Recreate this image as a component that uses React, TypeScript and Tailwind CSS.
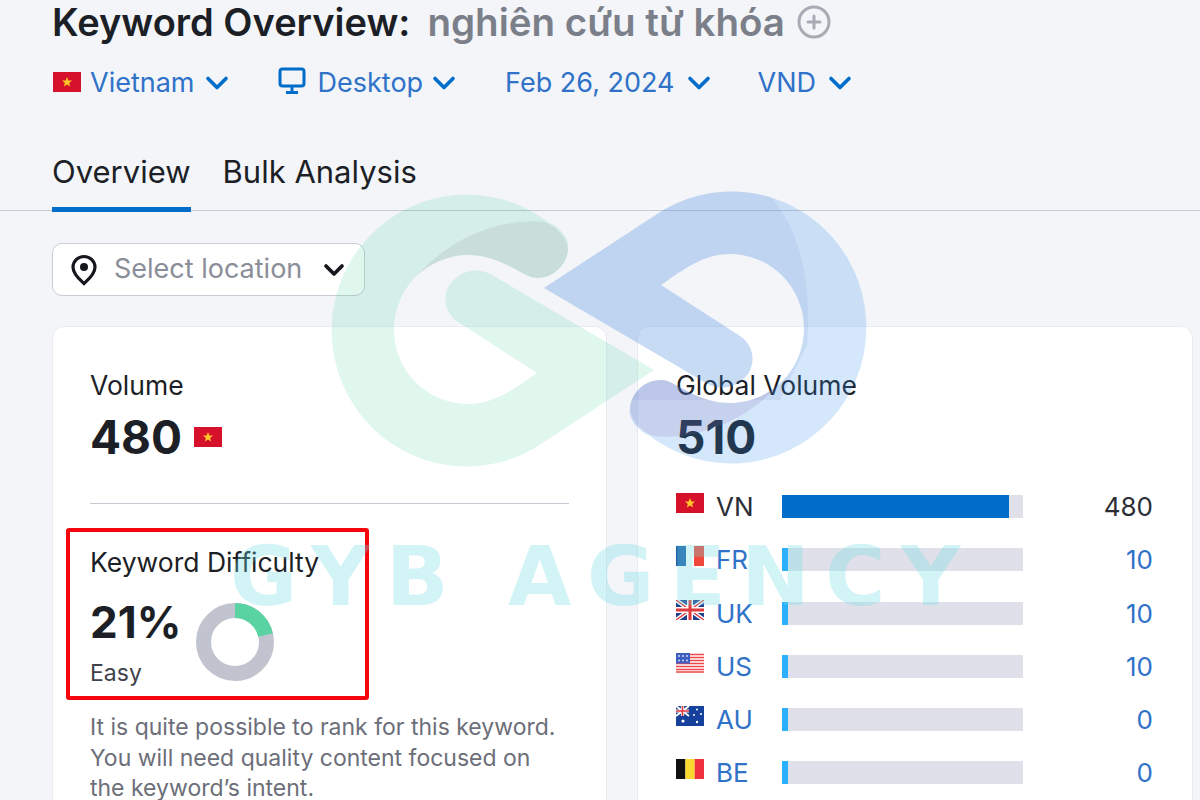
import { ChevronDown, CirclePlus } from "lucide-react";

const font = { fontFamily: "Inter, 'Noto Sans', sans-serif" };

const logoPath =
  "M654 370 L544 442 A135 136 0 1 1 548 222 C562 228 570 240 568 250 C566 270 545 283 528 276 L513 268 C495 258 480 255 468 255 A74 74.5 0 0 0 468 404 C495 404 515 388 537 373 L458 322 C440 310 442 285 460 275 C470 269 482 269 492 275 Z";

const crescentPath =
  "M544 222 C510 218 455 232 418 275 C432 262 450 255 468 255 C480 255 495 258 513 268 L528 276 C545 283 566 270 568 250 C568 238 556 226 544 222 Z";

const Vn = ({ className }: { className: string }) => (
  <svg viewBox="0 0 28 20" className={className}>
    <rect width="28" height="20" fill="#d5112b" />
    <path d="M14 5l1.4 3.4 3.6.2-2.8 2.3.9 3.5-3.1-1.9-3.1 1.9.9-3.5L9 8.6l3.6-.2z" fill="#ffc629" />
  </svg>
);

const Fr = () => (
  <svg viewBox="0 0 28 20" className="w-[28px] h-[20px]">
    <rect width="28" height="20" fill="#fff" />
    <rect width="10" height="20" fill="#1f5fa8" />
    <rect x="18" width="10" height="20" fill="#f0483a" />
  </svg>
);

const Uk = () => (
  <svg viewBox="0 0 28 20" className="w-[28px] h-[20px]">
    <rect width="28" height="20" fill="#23408f" />
    <path d="M0 0L28 20M28 0L0 20" stroke="#fff" strokeWidth="4" />
    <path d="M0 0L28 20M28 0L0 20" stroke="#e0393e" strokeWidth="1.4" />
    <path d="M14 0V20M0 10H28" stroke="#fff" strokeWidth="6" />
    <path d="M14 0V20M0 10H28" stroke="#e0393e" strokeWidth="3" />
  </svg>
);

const Us = () => (
  <svg viewBox="0 0 28 20" className="w-[28px] h-[20px]">
    <rect width="28" height="20" fill="#fff" />
    <path d="M0 1.5H28M0 4.5H28M0 7.5H28M0 10.5H28M0 13.5H28M0 16.5H28M0 19H28" stroke="#f0484a" strokeWidth="1.7" />
    <rect width="14" height="10.5" fill="#3f5fc0" />
    <g fill="#cfd8f5">
      <circle cx="3" cy="3" r="1" />
      <circle cx="7" cy="3" r="1" />
      <circle cx="11" cy="3" r="1" />
      <circle cx="3" cy="7.5" r="1" />
      <circle cx="7" cy="7.5" r="1" />
      <circle cx="11" cy="7.5" r="1" />
    </g>
  </svg>
);

const Au = () => (
  <svg viewBox="0 0 28 20" className="w-[28px] h-[20px]">
    <rect width="28" height="20" fill="#15409c" />
    <rect width="13" height="10" fill="#23408f" />
    <path d="M0 0L13 10M13 0L0 10" stroke="#fff" strokeWidth="1.8" />
    <path d="M6.5 0V10M0 5H13" stroke="#fff" strokeWidth="3.2" />
    <path d="M6.5 0V10M0 5H13" stroke="#e0393e" strokeWidth="1.6" />
    <g fill="#fff">
      <circle cx="7" cy="15" r="1.6" />
      <circle cx="21" cy="3.5" r="1" />
      <circle cx="25" cy="8" r="1" />
      <circle cx="18" cy="9" r="1" />
      <circle cx="21" cy="16" r="1.2" />
    </g>
  </svg>
);

const Be = () => (
  <svg viewBox="0 0 28 20" className="w-[28px] h-[20px]">
    <rect width="9.4" height="20" fill="#111" />
    <rect x="9.4" width="9.3" height="20" fill="#fbd92e" />
    <rect x="18.7" width="9.3" height="20" fill="#f0303c" />
  </svg>
);

const rows = [
  { code: "VN", flag: <Vn className="w-[28px] h-[20px]" />, value: "480", pct: 94 },
  { code: "FR", flag: <Fr />, value: "10", pct: 2.5 },
  { code: "UK", flag: <Uk />, value: "10", pct: 2.5 },
  { code: "US", flag: <Us />, value: "10", pct: 2.5 },
  { code: "AU", flag: <Au />, value: "0", pct: 2.5 },
  { code: "BE", flag: <Be />, value: "0", pct: 2.5 },
];

const Chevron = () => <ChevronDown className="w-[36px] h-[36px] text-[#006dca]" strokeWidth={2.4} />;

export default function App() {
  return (
    <div style={font} className="relative w-[1200px] h-[800px] overflow-hidden bg-[#f3f5f9] text-[#1c1f26]">
      <div className="pl-[52px] pt-[1px]">
        <div className="flex items-center h-[42px]">
          <h1 className="text-[38px] font-semibold leading-none whitespace-nowrap">Keyword Overview:</h1>
          <span className="ml-[17px] text-[38.5px] font-semibold leading-none whitespace-nowrap text-[#7b7f89]">nghiên cứu từ khóa</span>
          <CirclePlus className="ml-[11px] w-[36px] h-[36px] text-[#a8abb4]" strokeWidth={2} />
        </div>
        <div className="flex items-center h-[40px] mt-[20px] text-[27px] text-[#2f72c8] whitespace-nowrap">
          <Vn className="w-[28px] h-[20px] ml-[1px] -mt-[2px]" />
          <span className="ml-[9px]">Vietnam</span>
          <span className="ml-[4px]"><Chevron /></span>
          <svg viewBox="0 0 28 28" className="ml-[43px] w-[28px] h-[28px] -mt-[4px]" fill="none">
            <rect x="2" y="2" width="24" height="17" rx="2.5" stroke="#006dca" strokeWidth="3" />
            <path d="M14 20v4M8 25.5h12" stroke="#006dca" strokeWidth="3" />
          </svg>
          <span className="ml-[12px]">Desktop</span>
          <span className="ml-[3px]"><Chevron /></span>
          <span className="ml-[43px]">Feb 26, 2024</span>
          <span className="ml-[6px]"><Chevron /></span>
          <span className="ml-[41px]">VND</span>
          <span className="ml-[6px]"><Chevron /></span>
        </div>
      </div>

      <div className="mt-[48px] border-b border-[#c6c9d1] pl-[52px] flex gap-[32px] h-[60px] text-[31px] leading-none">
        <div className="h-[61px] border-b-[5px] border-[#006dca] pt-[5px]">Overview</div>
        <div className="pt-[5px]">Bulk Analysis</div>
      </div>

      <div className="pl-[52px] pt-[32px]">
        <div className="w-[313px] h-[53px] bg-white border border-[#c9ccd4] rounded-[10px] flex items-center pl-[17px] pr-[14px]">
          <svg viewBox="0 0 28 32" className="w-[28px] h-[32px]" fill="none">
            <path d="M14 2.5C7.8 2.5 3 7.3 3 13.2c0 7 7 12.6 11 16.3 4-3.7 11-9.3 11-16.3C25 7.3 20.2 2.5 14 2.5z" stroke="#16181d" strokeWidth="3.2" />
            <circle cx="14" cy="13" r="4" fill="#16181d" />
          </svg>
          <span className="ml-[16px] text-[27px] text-[#8a8e98] flex-1 whitespace-nowrap">Select location</span>
          <ChevronDown className="w-[32px] h-[32px] text-[#16181d]" strokeWidth={2.8} />
        </div>
      </div>

      <div className="pl-[52px] pr-[7px] pt-[30px] grid grid-cols-[555px_556px] gap-[30px]">
        <div className="bg-white rounded-[12px] border border-[#e9ebf1] h-[520px] px-[37px] pt-[43px]">
          <div className="text-[26.5px] leading-[30px]">Volume</div>
          <div className="flex items-center mt-[10px] h-[54px]">
            <span className="text-[46px] font-bold leading-none">480</span>
            <Vn className="ml-[12px] w-[28px] h-[20px]" />
          </div>
          <div className="mt-[39px] h-px bg-[#c6c9d1]" />
          <div className="mt-[24px] -ml-[24px] w-[303px] h-[172px] border-[4px] border-[#f5050c] rounded-[3px] pl-[20px] pt-[15px]">
            <div className="text-[26.5px] leading-[30px] whitespace-nowrap">Keyword Difficulty</div>
            <div className="flex">
              <div>
                <div className="text-[44px] font-bold leading-none mt-[23px]">21%</div>
                <div className="text-[23px] leading-[26px] mt-[16px] text-[#3f424b]">Easy</div>
              </div>
              <svg viewBox="0 0 80 80" className="ml-[14px] mt-[25px] w-[80px] h-[80px]">
                <circle cx="40" cy="40" r="31.5" fill="none" stroke="#c1c4ce" strokeWidth="15" />
                <path d="M40 8.5A31.5 31.5 0 0 1 70.5 33" fill="none" stroke="#59d3a1" strokeWidth="15" />
              </svg>
            </div>
          </div>
          <p className="mt-[12px] text-[23px] leading-[30.5px] text-[#6c6e79] whitespace-nowrap">
            It is quite possible to rank for this keyword.
            <br />
            You will need quality content focused on
            <br />
            the keyword’s intent.
          </p>
        </div>

        <div className="bg-white rounded-[12px] border border-[#e9ebf1] h-[520px] pl-[38px] pt-[43px]">
          <div className="text-[26.5px] leading-[30px]">Global Volume</div>
          <div className="text-[46px] font-bold leading-[54px] mt-[10px]">510</div>
          <div className="mt-[31px] flex flex-col gap-[30.3px]">
            {rows.map((row, i) => (
              <div key={row.code} className="flex items-center h-[23px]">
                <span className="-mt-[7px]">{row.flag}</span>
                <span className={`ml-[12px] w-[66px] text-[26px] ${i === 0 ? "text-[#2b2e36]" : "text-[#2f72c8]"}`}>{row.code}</span>
                <div className="w-[241px] h-[23px] bg-[#dfe0e9]">
                  <div
                    className={`h-full ${i === 0 ? "bg-[#006dca]" : "bg-[#2bb0ff]"}`}
                    style={{ width: `${row.pct}%` }}
                  />
                </div>
                <span className={`w-[130px] text-right text-[26px] ${i === 0 ? "text-[#2b2e36]" : "text-[#2f72c8]"}`}>{row.value}</span>
              </div>
            ))}
          </div>
        </div>
      </div>

      {/* watermark sits on top of everything */}
      <svg viewBox="0 0 1200 800" className="absolute inset-0 w-[1200px] h-[800px] pointer-events-none">
        <defs>
          <clipPath id="blueClip">
            <path d={logoPath} transform="rotate(180 599 329)" />
          </clipPath>
        </defs>
        <path d={logoPath} fill="#3ccf96" fillOpacity="0.16" />
        <path d={crescentPath} fill="#6b6f7a" fillOpacity="0.12" />
        <path d={logoPath} transform="rotate(180 599 329)" fill="#3b93ee" fillOpacity="0.22" />
        <path
          d="M530 180 H752 C800 215 812 280 807 345 L780 400 L600 400 L530 320 Z"
          clipPath="url(#blueClip)"
          fill="#3a5fb0"
          fillOpacity="0.08"
        />
        <path d={crescentPath} transform="rotate(180 599 329)" fill="#7a5fa8" fillOpacity="0.16" />
      </svg>
      <div
        className="absolute left-[230px] top-[529px] text-[82px] font-bold leading-[96px] tracking-[15.5px] whitespace-nowrap text-[#6fdde6] opacity-30 pointer-events-none"
        style={{ fontFamily: "'DejaVu Sans', sans-serif" }}
      >
        GYB AGENCY
      </div>
    </div>
  );
}
